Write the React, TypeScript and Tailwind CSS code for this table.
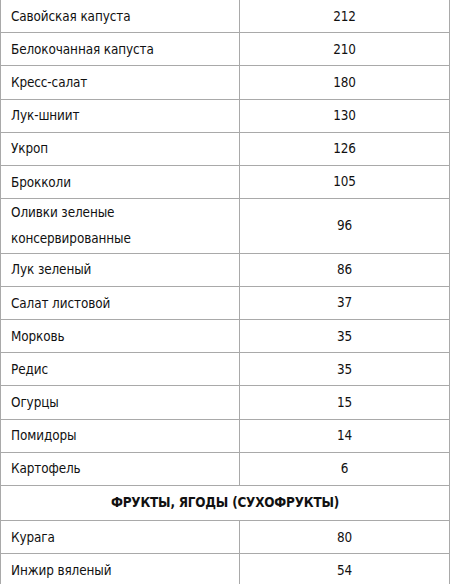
const vegetables: { name: string; value: string; tall?: boolean }[] = [
  { name: 'Савойская капуста', value: '212' },
  { name: 'Белокочанная капуста', value: '210' },
  { name: 'Кресс-салат', value: '180' },
  { name: 'Лук-шниит', value: '130' },
  { name: 'Укроп', value: '126' },
  { name: 'Брокколи', value: '105' },
  { name: 'Оливки зеленые консервированные', value: '96', tall: true },
  { name: 'Лук зеленый', value: '86' },
  { name: 'Салат листовой', value: '37' },
  { name: 'Морковь', value: '35' },
  { name: 'Редис', value: '35' },
  { name: 'Огурцы', value: '15' },
  { name: 'Помидоры', value: '14' },
  { name: 'Картофель', value: '6' },
]

const fruits = [
  { name: 'Курага', value: '80' },
  { name: 'Инжир вяленый', value: '54' },
]

function Row({ name, value, tall }: { name: string; value: string; tall?: boolean }) {
  return (
    <div className={`grid grid-cols-[239px_1fr] border-b border-[#a9a9a9] pt-px ${tall ? 'h-[54.6px]' : 'h-[33.2px]'}`}>
      <div className="flex items-center pl-[10px] pr-4 border-r border-[#a9a9a9] -mt-px leading-[26px]">
        {tall ? (
          <span className="pt-px">
            Оливки зеленые
            <br />
            консервированные
          </span>
        ) : (
          <span className="pt-px">{name}</span>
        )}
      </div>
      <div className="flex items-center justify-center">{value}</div>
    </div>
  )
}

export default function App() {
  return (
    <div
      className="w-[450px] h-[584px] overflow-hidden bg-white text-[13.4px] text-[#111] tracking-[-0.1px]"
      style={{ fontFamily: '"DejaVu Sans Condensed", "DejaVu Sans", sans-serif' }}
    >
      <div className="border-l border-r border-[#a9a9a9]">
        {vegetables.map((v) => (
          <Row key={v.name} {...v} />
        ))}
        <div className="h-[35px] flex items-center justify-center border-b border-[#a9a9a9] font-bold tracking-[-0.2px]">
          ФРУКТЫ, ЯГОДЫ (СУХОФРУКТЫ)
        </div>
        {fruits.map((v) => (
          <Row key={v.name} {...v} />
        ))}
      </div>
    </div>
  )
}
